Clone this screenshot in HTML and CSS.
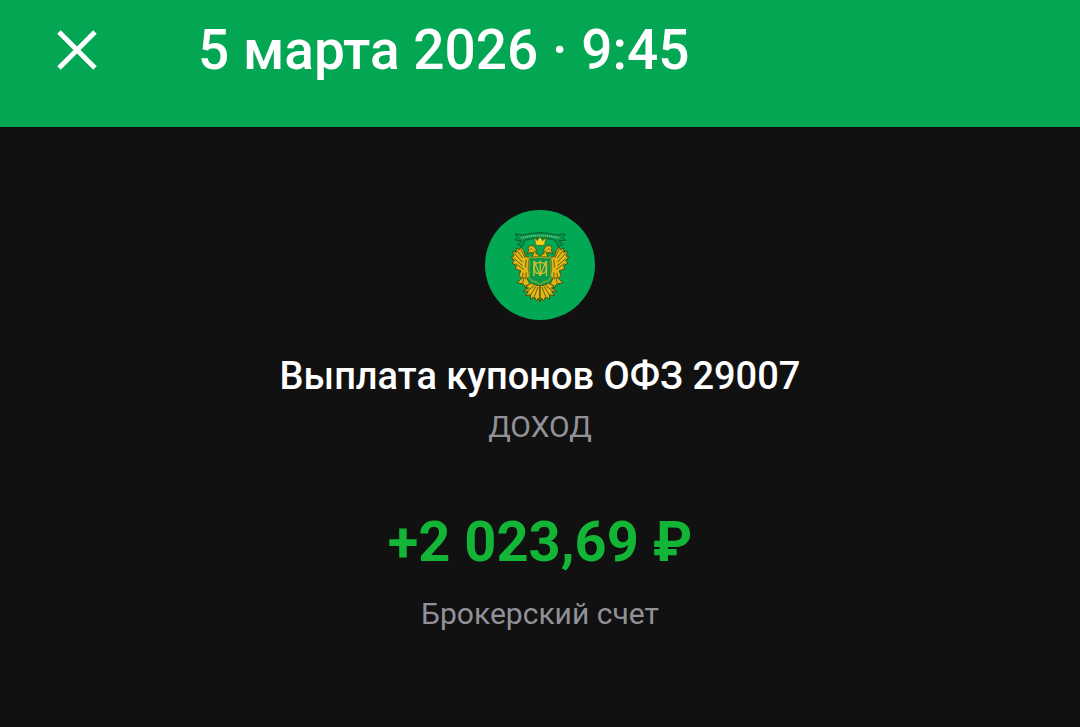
FILE: index.html
```html
<!DOCTYPE html>
<html lang="ru">
<head>
    <meta charset="UTF-8">
    <meta name="viewport" content="width=device-width, initial-scale=1.0">
    <title>Выплата купонов</title>
    <link rel="stylesheet" href="styles.css">
</head>
<body>
    <header class="top-bar">
        <button class="close-button" type="button" aria-label="Закрыть">
            <svg viewBox="0 0 40 40" aria-hidden="true">
                <path d="M2 2L38 38M38 2L2 38"/>
            </svg>
        </button>
        <h1 class="date">5 марта 2026 · 9:45</h1>
    </header>
    <main class="operation">
        <svg class="emblem" viewBox="15 15 330 330" aria-hidden="true">
            <defs>
                <!-- left half of the eagle, mirrored below -->
                <g id="half">
                    <path class="wing" d="M148 158L137 154L131 136L122 126L119 134L108 129L109 142L97 139L102 153L94 155L103 168L96 174L109 182L106 192L122 197L117 212L125 220L112 234L130 237L138 250L149 236L141 220L149 213L145 192L146 168Z"/>
                    <path class="feather" d="M111 136L128 159M104 146L127 171M102 160L128 183M106 176L132 194M123 134L136 159M138 164L137 187M130 203L125 221L133 217L128 234M139 202L137 223"/>
                    <path class="wing" d="M172 156L155 156L161 145L151 142L141 147L147 134L143 129L152 121L163 124L169 134L167 144L178 151Z"/>
                    <path class="feather" d="M152 132H157M163 136L161 144"/>
                    <path class="wing" d="M180 242L166 240L154 235L137 243L146 249L130 258L145 260L136 273L152 269L151 283L163 276L170 288L175 279L180 291Z"/>
                    <path class="feather" d="M162 243L143 257M168 244L151 270M174 246L163 275M180 246V282"/>
                </g>
            </defs>
            <circle class="emblem-back" cx="180" cy="180" r="165"/>
            <path class="ribbon" d="M105 87Q121 88 128 90Q180 76 232 90Q240 87 256 87L249 98L257 106L237 107L249 119L234 124L226 106Q180 92 135 106L127 124L112 119L124 108L105 105L113 97Z"/>
            <path class="motto" d="M123 99Q180 84 238 99"/>
            <use href="#half"/>
            <use href="#half" transform="translate(360 0) scale(-1 1)"/>
            <path class="crown" d="M163 98L172 107L180 95L188 107L198 98L193 121H168Z"/>
            <path class="shield" d="M147 156Q164 162 180 156Q196 162 213 156V218Q206 230 190 231L180 239L170 231Q154 230 147 218Z"/>
            <text class="monogram" x="180" y="214">Ф</text>
            <text class="monogram" x="180" y="214">М</text>
        </svg>
        <h2 class="title">Выплата купонов ОФЗ 29007</h2>
        <p class="kind">ДОХОД</p>
        <p class="amount">+2 023,69 ₽</p>
        <p class="account">Брокерский счет</p>
    </main>
</body>
</html>
```
FILE: styles.css
```css
body {
    margin: 0;
    min-height: 100vh;
    font-family: Roboto, sans-serif;
    color: #fff;
    background-color: #111;
}
h1, h2, p {
    margin: 0;
}
.top-bar {
    display: flex;
    align-items: center;
    gap: 93px;
    padding: 18px 49px 45px;
    background-color: #02a653;
}
.close-button {
    display: flex;
    padding: 8px;
    border: 0;
    background: none;
    cursor: pointer;
}
.close-button svg {
    width: 40px;
    height: 40px;
    fill: none;
    stroke: #fff;
    stroke-width: 5;
}
.date {
    font-size: 55px;
    font-weight: 500;
    line-height: 64px;
}
.operation {
    display: flex;
    flex-direction: column;
    align-items: center;
    padding: 83px 24px;
    text-align: center;
}
.emblem {
    width: 110px;
    height: 110px;
}
.title {
    margin-top: 32px;
    font-size: 38px;
    font-weight: 500;
    line-height: 48px;
}
.kind, .account {
    font-size: 30px;
    line-height: 36px;
    color: #919197;
}
.kind {
    margin-top: 9px;
}
.amount {
    margin-top: 65px;
    font-size: 56px;
    font-weight: 700;
    line-height: 64px;
    color: #12b535;
}
.account {
    margin-top: 22px;
}

/* emblem */
.emblem-back {
    fill: #03a854;
}
.ribbon {
    fill: #06964a;
    stroke: #075f31;
    stroke-width: 3;
}
.motto {
    fill: none;
    stroke: #62c475;
    stroke-width: 5;
    stroke-dasharray: 4 2;
}
.wing {
    fill: #dfb817;
    stroke: #4c5010;
    stroke-width: 3;
}
.feather {
    fill: none;
    stroke: #705f0b;
    stroke-width: 3;
}
.crown {
    fill: #f2ce20;
    stroke: #4c6810;
    stroke-width: 2;
}
.shield {
    fill: #07984a;
    stroke: #b8aa1b;
    stroke-width: 3;
}
.monogram {
    font-size: 60px;
    font-weight: 300;
    text-anchor: middle;
    fill: #d8c329;
}
```
